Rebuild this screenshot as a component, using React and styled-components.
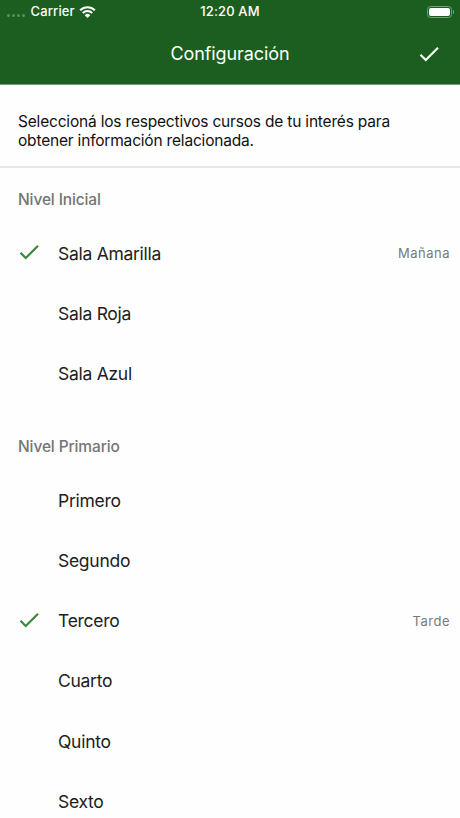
import React, { useState } from 'react';
import styled, { createGlobalStyle } from 'styled-components';

const sections = [
  {
    title: 'Nivel Inicial',
    courses: ['Sala Amarilla', 'Sala Roja', 'Sala Azul'],
  },
  {
    title: 'Nivel Primario',
    courses: ['Primero', 'Segundo', 'Tercero', 'Cuarto', 'Quinto', 'Sexto'],
  },
];

function CheckIcon() {
  return (
    <CheckSvg viewBox="0 0 24 24" aria-hidden="true">
      <path d="M9 16.17L4.83 12l-1.42 1.41L9 19 21 7l-1.41-1.41z" fill="currentColor" />
    </CheckSvg>
  );
}

function StatusBar() {
  return (
    <Status>
      <Carrier>
        <Dots>
          <Dot />
          <Dot />
          <Dot />
          <Dot />
        </Dots>
        <span>Carrier</span>
        <WifiSvg viewBox="0 0 17 12" aria-hidden="true">
          <path d="M1.1 4.3a10.5 10.5 0 0 1 14.8 0" />
          <path d="M3.8 7a6.7 6.7 0 0 1 9.4 0" />
          <path d="M8.5 12 5.7 9.2a4 4 0 0 1 5.6 0z" fill="#fff" stroke="none" />
        </WifiSvg>
      </Carrier>
      <Clock>12:20 AM</Clock>
      <Battery>
        <BatteryBody>
          <BatteryLevel />
        </BatteryBody>
        <BatteryTip />
      </Battery>
    </Status>
  );
}

function App() {
  const [shifts, setShifts] = useState({ 'Sala Amarilla': 'Mañana', Tercero: 'Tarde' });

  const toggleCourse = (name) => {
    setShifts({ ...shifts, [name]: shifts[name] ? null : 'Mañana' });
  };

  return (
    <Screen>
      <GlobalStyle />
      <Header>
        <StatusBar />
        <Toolbar>
          <Title>Configuración</Title>
          <SaveButton aria-label="Guardar">
            <CheckIcon />
          </SaveButton>
        </Toolbar>
      </Header>
      <Intro>
        Seleccioná los respectivos cursos de tu interés para
        <br />
        obtener información relacionada.
      </Intro>
      <List>
        {sections.map((section) => (
          <section key={section.title}>
            <SectionTitle>{section.title}</SectionTitle>
            {section.courses.map((name) => (
              <Row key={name} onClick={() => toggleCourse(name)}>
                <IconSlot>{shifts[name] && <CheckIcon />}</IconSlot>
                <CourseName>{name}</CourseName>
                {shifts[name] && <Shift>{shifts[name]}</Shift>}
              </Row>
            ))}
          </section>
        ))}
      </List>
    </Screen>
  );
}

export default App;

const GlobalStyle = createGlobalStyle`
  body {
    margin: 0;
    background: #fefefe;
    font-family: Inter, 'Liberation Sans', sans-serif;
  }
`;

const Screen = styled.div`
  display: flex;
  flex-direction: column;
  height: 818px;
  overflow: hidden;
  background: #fefefe;
`;

const Header = styled.header`
  flex: none;
  height: 84px;
  background: #1b5e20;
  border-bottom: 1px solid #76997a;
  color: #fff;
`;

const Status = styled.div`
  display: grid;
  grid-template-columns: 1fr auto 1fr;
  align-items: center;
  height: 23px;
  padding: 0 6px 0 7px;
  box-sizing: border-box;
  font-size: 13px;
  font-weight: 500;
  line-height: 23px;
  letter-spacing: 0.15px;
`;

const Carrier = styled.div`
  display: flex;
  align-items: center;
`;

const Dots = styled.div`
  display: flex;
  gap: 2px;
  width: 23.5px;
  padding-top: 8px;
`;

const Dot = styled.span`
  width: 3px;
  height: 3px;
  border-radius: 50%;
  background: #5b8c5e;
`;

const WifiSvg = styled.svg`
  width: 17px;
  height: 12px;
  margin-left: 4px;
  fill: none;
  stroke: #fff;
  stroke-width: 2.1;
`;

const Clock = styled.div`
  padding-right: 1px;
  letter-spacing: 0.15px;
`;

const Battery = styled.div`
  display: flex;
  align-items: center;
  justify-content: flex-end;
  gap: 1px;
`;

const BatteryBody = styled.div`
  width: 25px;
  height: 12px;
  padding: 1px;
  box-sizing: border-box;
  border: 1px solid #76a078;
  border-radius: 3.5px;
`;

const BatteryLevel = styled.div`
  height: 100%;
  border-radius: 2px;
  background: #fff;
`;

const BatteryTip = styled.div`
  width: 1px;
  height: 4px;
  border-radius: 0 2px 2px 0;
  background: #76a078;
`;

const Toolbar = styled.div`
  display: grid;
  grid-template-columns: 1fr auto 1fr;
  align-items: center;
  height: 61px;
  padding: 0 18px;
`;

const Title = styled.h1`
  grid-column: 2;
  margin: 0;
  font-size: 18px;
  font-weight: 400;
  line-height: 24px;
  letter-spacing: -0.08px;
`;

const SaveButton = styled.button`
  justify-self: end;
  display: flex;
  padding: 0;
  border: none;
  background: none;
  color: #fff;
  cursor: pointer;
`;

const CheckSvg = styled.svg`
  display: block;
  width: 26px;
  height: 26px;
`;

const Intro = styled.p`
  flex: none;
  height: 83px;
  margin: 0;
  padding: 27px 18px 0;
  box-sizing: border-box;
  border-bottom: 2px solid #e6e7e7;
  color: #111;
  font-size: 15.5px;
  line-height: 19px;
  letter-spacing: -0.19px;
  white-space: nowrap;
`;

const List = styled.main`
  margin-top: -10.8px;
`;

const SectionTitle = styled.h2`
  height: 47.3px;
  margin: 0;
  padding: 18.6px 0 0 18px;
  color: #757575;
  font-size: 15.5px;
  font-weight: 500;
  line-height: 48px;
  letter-spacing: -0.12px;
`;

const Row = styled.div`
  display: flex;
  align-items: center;
  height: 60.3px;
  padding: 0 10px 0 16px;
  cursor: pointer;
`;

const IconSlot = styled.div`
  flex: none;
  width: 42px;
  padding-bottom: 2px;
  color: #3c873f;
`;

const CourseName = styled.span`
  flex: 1;
  color: #212121;
  font-size: 17.5px;
  letter-spacing: -0.28px;
`;

const Shift = styled.span`
  color: #7a7a7a;
  font-size: 13px;
  letter-spacing: 0.5px;
`;
